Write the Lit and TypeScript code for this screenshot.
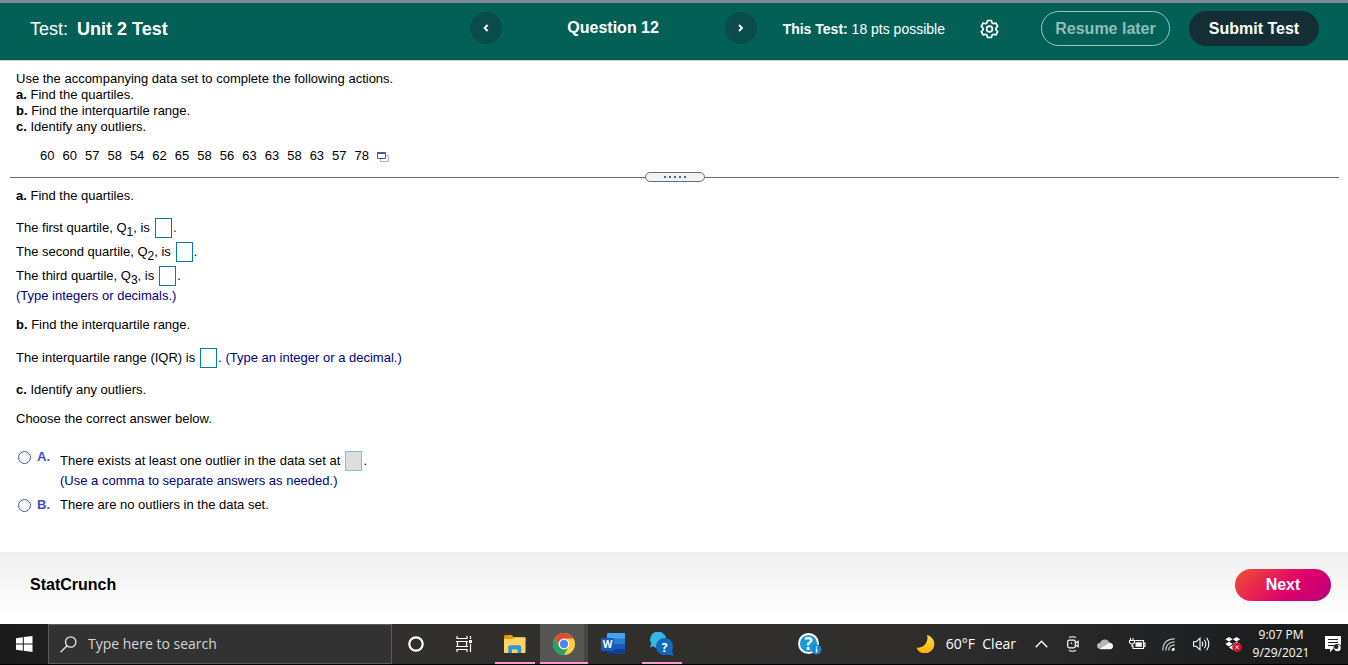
import { LitElement, html, css, svg } from "lit";
import { customElement, state } from "lit/decorators.js";

const DATA = [60, 60, 57, 58, 54, 62, 65, 58, 56, 63, 63, 58, 63, 57, 78];

@customElement("test-header")
class TestHeader extends LitElement {
  static styles = css`
    :host {
      display: block;
      background: #036056;
      border-top: 3px solid #808996;
      border-bottom: 1px solid #c9d3d9;
      color: #fff;
      font-family: "Liberation Sans", Arial, sans-serif;
    }
    .bar {
      display: flex;
      align-items: flex-start;
      height: 49px;
      padding: 8px 29px 0 30px;
    }
    .title {
      flex: 1;
      margin: 0;
      font-size: 18px;
      font-weight: 400;
      line-height: 36px;
      white-space: nowrap;
    }
    .title b { margin-left: 4px; }
    .nav { display: flex; align-items: center; height: 34px; margin-right: 26px; }
    .question { width: 223px; margin: 0; text-align: center; font-size: 16px; line-height: 36px; }
    button { font: inherit; padding: 0; border: 0; color: inherit; cursor: pointer; }
    .arrow {
      width: 32px;
      height: 32px;
      border-radius: 50%;
      background: #0a4c49;
      display: flex;
      align-items: center;
      justify-content: center;
    }
    .points { margin: 0; font-size: 14px; line-height: 36px; white-space: nowrap; }
    .gear { display: flex; align-items: center; height: 36px; margin: 0 42px 0 35px; background: none; }
    .pill {
      box-sizing: border-box;
      width: 130px;
      height: 35px;
      border-radius: 18px;
      font-size: 16px;
      font-weight: 700;
      white-space: nowrap;
    }
    .resume { width: 129px; margin-right: 19px; border: 1px solid #9cc4bf; background: none; color: #92bdb8; }
    .submit { background: #152e35; }
  `;
  render() {
    return html`
      <header class="bar">
        <h1 class="title">Test: <b>Unit 2 Test</b></h1>
        <nav class="nav" aria-label="Questions">
          <button class="arrow" aria-label="Previous question">
            <svg width="8" height="10" viewBox="0 0 8 10"><path d="M5.6 2 2.6 5l3 3" fill="none" stroke="#fff" stroke-width="1.8"/></svg>
          </button>
          <h2 class="question">Question 12</h2>
          <button class="arrow" aria-label="Next question">
            <svg width="8" height="10" viewBox="0 0 8 10"><path d="m2 2 3 3-3 3" fill="none" stroke="#fff" stroke-width="1.8"/></svg>
          </button>
        </nav>
        <p class="points"><b>This Test:</b> 18 pts possible</p>
        <button class="gear" aria-label="Settings">
          <svg width="19" height="20" viewBox="0 0 19 20" fill="none" stroke="#fff" stroke-width="1.7" stroke-linejoin="round">
            <path d="M7.6 1.5h3.8l.6 2.3 1.5.9 2.3-.7 1.9 3.3-1.7 1.7v2l1.7 1.7-1.9 3.3-2.3-.7-1.5.9-.6 2.3H7.6L7 16.2l-1.500-.9-2.300.7-1.900-3.300L3 11V9L1.300 7.300 3.200 4l2.300.7L7 3.800z"/>
            <circle cx="9.5" cy="10" r="2.9"/>
          </svg>
        </button>
        <button class="pill resume">Resume later</button>
        <button class="pill submit">Submit Test</button>
      </header>
    `;
  }
}

@customElement("question-panel")
class QuestionPanel extends LitElement {
  @state() choice = "";

  static styles = css`
    :host {
      display: block;
      padding: 10px 0 32px;
      background: #fff;
      color: #000;
      font: 13px/16px "Liberation Sans", Arial, sans-serif;
    }
    section { padding: 0 16px; }
    p { margin: 0; }
    .data { display: flex; align-items: center; gap: 8px; margin: 13px 0 0 24px; }
    .copy { display: flex; margin: 2px 0 0; padding: 0; border: 0; background: none; cursor: pointer; }
    .divider { display: flex; align-items: center; margin: 8px 9px 6px 10px; height: 10px; }
    .rule { flex: 1; height: 1px; background: #5f7180; }
    .handle {
      box-sizing: border-box;
      display: flex;
      align-items: center;
      justify-content: center;
      gap: 3px;
      width: 60px;
      height: 10px;
      padding: 0;
      border: 1px solid #5f7180;
      border-radius: 5px;
      background: #f1f3f4;
    }
    .handle i { width: 2px; height: 2px; background: #5b6670; }
    .spaced { margin-top: 13px; }
    .answers { margin-top: 12px; }
    .row { display: flex; align-items: center; height: 24px; white-space: pre; }
    sub { font-size: 12px; line-height: 0; vertical-align: -4px; }
    input[type="text"] {
      box-sizing: border-box;
      width: 17px;
      height: 20px;
      margin: 0 1px 0 5px;
      padding: 0;
      border: 1px solid #007fa3;
      border-radius: 0;
      background: #fff;
      font: inherit;
      text-align: center;
    }
    input[type="text"]:disabled { border-color: #7fbfd1; background: #dedede; }
    .hint { color: #000080; }
    .choices { margin: 0; padding: 22px 0 0; border: 0; }
    .choice { display: flex; }
    .choice + .choice { margin-top: 8px; }
    .pick { display: flex; width: 42px; margin-left: 2px; color: #3f51c5; font-weight: 700; }
    .pick input {
      appearance: none;
      box-sizing: border-box;
      width: 13px;
      height: 13px;
      margin: 2px 6px 0 0;
      border: 1px solid #3f51c5;
      border-radius: 50%;
    }
    .pick input:checked { background: #3f51c5; box-shadow: inset 0 0 0 2px #fff; }
  `;

  private pick(letter: string) {
    return html`<label class="pick"><input type="radio" name="outlier" value=${letter}
      @change=${() => (this.choice = letter)} />${letter}.</label>`;
  }

  render() {
    const quartiles = [["first", 1], ["second", 2], ["third", 3]];
    return html`
      <section>
        <p>Use the accompanying data set to complete the following actions.</p>
        <p><b>a.</b> Find the quartiles.</p>
        <p><b>b.</b> Find the interquartile range.</p>
        <p><b>c.</b> Identify any outliers.</p>
        <div class="data">
          ${DATA.map((n) => html`<span>${n}</span>`)}
          <button class="copy" aria-label="Open data set">
            <svg width="13" height="10" viewBox="0 0 13 10"><path d="M3.500 3.500h8v6h-8z" fill="#fff" stroke="#a9b2dd"/><path d="M.5.5h8v6h-8z" fill="#fff" stroke="#4656ab"/><path d="M0 0h9v2H0z" fill="#4656ab"/></svg>
          </button>
        </div>
      </section>
      <div class="divider">
        <span class="rule"></span>
        <button class="handle" aria-label="Resize panels"><i></i><i></i><i></i><i></i><i></i></button>
        <span class="rule"></span>
      </div>
      <section>
        <p><b>a.</b> Find the quartiles.</p>
        <div class="answers">
          ${quartiles.map(([name, n]) => html`
            <div class="row"><label for="q${n}">The ${name} quartile, Q<sub>${n}</sub>, is</label><input id="q${n}" type="text" />.</div>`)}
        </div>
        <p class="hint">(Type integers or decimals.)</p>
        <p class="spaced"><b>b.</b> Find the interquartile range.</p>
        <div class="row spaced"><label for="iqr">The interquartile range (IQR) is</label><input id="iqr" type="text" />. <span class="hint">(Type an integer or a decimal.)</span></div>
        <p class="answers"><b>c.</b> Identify any outliers.</p>
        <p class="spaced">Choose the correct answer below.</p>
        <fieldset class="choices" aria-label="Outliers">
          <div class="choice">
            ${this.pick("A")}
            <div>
              <div class="row"><label for="outliers">There exists at least one outlier in the data set at</label><input id="outliers" type="text" ?disabled=${this.choice !== "A"} />.</div>
              <p class="hint">(Use a comma to separate answers as needed.)</p>
            </div>
          </div>
          <div class="choice">${this.pick("B")}<p>There are no outliers in the data set.</p></div>
        </fieldset>
      </section>
    `;
  }
}

@customElement("test-footer")
class TestFooter extends LitElement {
  static styles = css`
    :host {
      box-sizing: border-box;
      display: flex;
      align-items: center;
      justify-content: space-between;
      height: 72px;
      padding: 0 17px 6px 30px;
      background: linear-gradient(#f0f0f0, #fff 90%);
      font-family: "Liberation Sans", Arial, sans-serif;
    }
    .tool { color: #000; font-size: 16px; font-weight: 700; text-decoration: none; }
    .next {
      width: 96px;
      height: 32px;
      padding: 0;
      border: 0;
      border-radius: 16px;
      background: linear-gradient(135deg, #f05033, #df006b 60%, #b7007c);
      color: #fff;
      font: 700 16px "Liberation Sans", Arial, sans-serif;
      cursor: pointer;
    }
  `;
  render() {
    return html`<a class="tool" href="#">StatCrunch</a><button class="next">Next</button>`;
  }
}

const icons = {
  start: svg`<svg width="17" height="16" viewBox="0 0 17 16" fill="#fff"><path d="M0 2.300 6.800 1.300v6.200H0zM7.800 1.100 16.500 0v7.500H7.800zM0 8.500h6.800v6.200L0 13.700zM7.800 8.500h8.700V16l-8.700-1.200z"/></svg>`,
  search: svg`<svg width="17" height="17" viewBox="0 0 17 17" fill="none" stroke="#e8e8e8" stroke-width="1.300"><circle cx="10.700" cy="6" r="5.200"/><path d="M7 9.700.6 16.200"/></svg>`,
  cortana: svg`<svg width="16" height="16" viewBox="0 0 16 16"><circle cx="8" cy="8" r="6.700" fill="none" stroke="#fff" stroke-width="2.200"/></svg>`,
  tasks: svg`<svg width="17" height="16" viewBox="0 0 17 16" fill="none" stroke="#fff" stroke-width="1.200"><path d="M1 0v2.500h10V0M0 5.500h12M0 10.500h12M1.500 5v6M10.500 5v6M1 16v-2.500h10V16M14.500 0v3M14.500 8v8"/><path d="M13 4h3v3h-3z" fill="#fff" stroke="none"/></svg>`,
  folder: svg`<svg width="22" height="19" viewBox="0 0 22 19"><path d="M0 1.500Q0 0 1.500 0h6.300l1.500 2H20q1.500 0 1.500 1.500V6H0z" fill="#e29b09"/><path d="M0 4h8.500l1.500-1.500h11.500V17q0 1-1 1H1q-1 0-1-1z" fill="#ffd664"/><path d="M4.200 18v-6q0-1.800 1.800-1.800h9.500q1.800 0 1.800 1.800v6h-3.800v-3.500H8V18z" fill="#3295df"/></svg>`,
  chrome: svg`<svg width="22" height="22" viewBox="0 0 22 22"><circle cx="11" cy="11" r="11" fill="#ffcd40"/><path d="M1.470 5.500A11 11 0 0 1 20.530 5.500H11A5.500 5.500 0 0 0 6.240 13.750z" fill="#dd4b3e"/><path d="M1.470 5.500A11 11 0 0 0 11 22l4.760-8.250A5.500 5.500 0 0 1 6.240 13.750z" fill="#1da462"/><circle cx="11" cy="11" r="5.300" fill="#fff"/><circle cx="11" cy="11" r="4.200" fill="#4587f3"/></svg>`,
  word: svg`<svg width="24" height="22" viewBox="0 0 24 22"><path d="M6 1q0-1 1-1h17v6H6z" fill="#41a5ee"/><path d="M6 5.500h18V11H6z" fill="#2b7cd3"/><path d="M6 11h18v5.500H6z" fill="#185abd"/><path d="M6 16.200h18V21H7q-1 0-1-1z" fill="#103f91"/><rect y="5" width="13" height="13" rx="1" fill="#185abd"/><text x="6.500" y="15" text-anchor="middle" fill="#fff" font-family="Open Sans" font-size="10" font-weight="700">W</text></svg>`,
  help: svg`<svg width="24" height="24" viewBox="0 0 24 24"><path d="M0 15.500 1.200 11.500A8 8 0 1 1 9 15.500Q5 16.500 3.500 14.300z" fill="#35b6e9"/><path d="M23.500 24 17.500 22.500a8.500 8.500 0 1 1 4.500-4z" fill="#0f6cbd"/><text x="14.500" y="19.500" text-anchor="middle" fill="#fff" font-family="Open Sans" font-size="12" font-weight="700">?</text></svg>`,
  support: svg`<svg width="24" height="22" viewBox="0 0 24 22"><circle cx="10.500" cy="10.500" r="10.500" fill="#fff"/><circle cx="10.500" cy="10.500" r="8.600" fill="#1a9bd7"/><text x="10.500" y="16.500" text-anchor="middle" fill="#fff" font-family="Open Sans" font-size="17" font-weight="700">?</text><circle cx="18.500" cy="16.500" r="5" fill="#1789c9"/><path d="M17.800 15.500h1.400v4h-1.400zM17.800 13.200h1.400v1.400h-1.400z" fill="#fff"/></svg>`,
  moon: svg`<svg width="19" height="18" viewBox="0 0 19 18"><defs><linearGradient id="m" x2="0" y2="1"><stop stop-color="#ffe04a"/><stop offset="1" stop-color="#ffae00"/></linearGradient></defs><path d="M11 0A9.300 9.300 0 1 1 .4 12.600 9.700 9.700 0 0 0 11 0z" fill="url(#m)"/></svg>`,
  up: svg`<svg width="13" height="8" viewBox="0 0 13 8"><path d="m.7 7.200 5.800-6 5.800 6" fill="none" stroke="#fff" stroke-width="1.300"/></svg>`,
  meet: svg`<svg width="12" height="16" viewBox="0 0 12 16" fill="none" stroke="#fff" stroke-width="1.200"><path d="M2 1.500Q5.500 0 9 1.500M2 14.500q3.500 1.500 7 0"/><rect x=".7" y="4.200" width="7.600" height="7.600" rx="1.500"/><path d="m8.300 7 2.800-1.700v5.400L8.300 9M4.500 6.500v1.500"/></svg>`,
  cloud: svg`<svg width="16" height="11" viewBox="0 0 16 11"><path d="M3 10Q0 9.600 0 6.800 0 4 3 3.700 5 0 8.500.5q3 .4 4 3L16 7q-.5 3-3 3z" fill="#b5b5b5"/><path d="M2.500 10 8 6.500l4.500-2.800Q16 4 16 7t-3 3.300H4z" fill="#f5f5f5"/></svg>`,
  battery: svg`<svg width="17" height="12" viewBox="0 0 17 12" fill="none" stroke="#fff" stroke-width="1.100"><path d="M6 2.500h8.500v8H4V7.500M14.500 5H16v3.500h-1.500M1.500 0v2.500M4 0v2.500M.5 2.500h5v2q-.5 1.500-2.500 1.500t-2.500-1.500zM3 6v3"/><path d="M6.500 4.300h6.300v4.500H6.500z" fill="#fff" stroke="none"/></svg>`,
  wifi: svg`<svg width="14" height="13" viewBox="0 0 14 13" fill="none" stroke="#c8c8c8" stroke-width="1.200"><path d="M.8 12.500Q.8 1 12.800.8M3.800 12.500Q4 4 12.800 3.800M6.700 12.500q.2-5.500 6.100-5.700"/><path d="M9.500 12.800q0-3 3-3.100v3.100z" fill="#fff" stroke="none"/></svg>`,
  sound: svg`<svg width="17" height="14" viewBox="0 0 17 14" fill="none" stroke="#fff" stroke-width="1.100"><path d="M.6 4.700h2.600L7 1.200v11.600L3.200 9.300H.6zM9 4.800q1.500 2.200 0 4.400M11.300 2.800q3 4.200 0 8.400M13.600.8q4.400 6.200 0 12.400"/></svg>`,
  dropbox: svg`<svg width="17" height="16" viewBox="0 0 17 16"><path d="m4 1 3.700 2.300L4 5.600.3 3.300zM11.500 1l3.700 2.300-3.700 2.300-3.700-2.300zM4 5.800l3.700 2.300L4 10.400.3 8.100zM11.500 5.800l3.700 2.300-3.700 2.300-3.700-2.300zM7.700 9.200l3.700 2.300-3.700 2.300L4 11.500z" fill="#fff"/><circle cx="12" cy="11.200" r="4.700" fill="#d6112b"/><path d="m10.300 9.500 3.400 3.400m0-3.400-3.400 3.400" stroke="#fff"/></svg>`,
  notice: svg`<svg width="17" height="17" viewBox="0 0 17 17"><path d="M0 0h16v13H8l-3 3v-3H0z" fill="#fff"/><path d="M3 3.500h10M3 6.500h10M3 9.500h6" stroke="#222"/><circle cx="12.500" cy="12" r="4" fill="#222"/><circle cx="12.500" cy="12" r="3.200" fill="#fff"/><circle cx="11.300" cy="10.800" r="2.200" fill="#222"/></svg>`,
};

@customElement("task-bar")
class TaskBar extends LitElement {
  static styles = css`
    :host {
      box-sizing: border-box;
      display: flex;
      height: 41px;
      border-bottom: 1px solid #000;
      background: linear-gradient(90deg, #1a1a1a, #1f1f1f 4%, #32302c 30%, #312f2d 60%, #29292a 78%, #1d1e1f 92%, #1c1c1c);
      color: #fff;
      font: 14px/20px "Open Sans", "Noto Sans", sans-serif;
    }
    button {
      box-sizing: border-box;
      display: flex;
      align-items: center;
      justify-content: center;
      width: 48px;
      height: 40px;
      padding: 0;
      border: 0;
      background: none;
      color: inherit;
      font: inherit;
    }
    .search {
      box-sizing: border-box;
      display: flex;
      align-items: center;
      gap: 11px;
      width: 344px;
      height: 40px;
      padding: 0 11px;
      border: 1px solid #5c5c5c;
      background: #323232;
    }
    .search input { flex: 1; min-width: 0; padding: 0; border: 0; outline: 0; background: none; color: #fff; font: inherit; }
    .search input::placeholder { color: #d6d6d6; opacity: 1; }
    .apps { display: flex; gap: 1px; margin-left: 3px; }
    .app { border-bottom: 2px solid transparent; border-top: 2px solid transparent; }
    .running { width: 40px; margin: 0 4px; border-bottom-color: #ff9bd2; }
    .active { border-color: transparent transparent #ff9bd2; background: linear-gradient(90deg, #555653 44px, #454543 44px) border-box; }
    .middle { display: flex; flex: 1; justify-content: center; padding-left: 18px; }
    .weather { width: auto; gap: 11px; margin-right: 9px; white-space: pre; }
    .tray { display: flex; }
    .tray button { width: 32px; }
    .clock { width: 64px; font-size: 12px; line-height: 18px; flex-direction: column; white-space: nowrap; }
    .notice { width: 35px; padding-left: 6px; }
  `;
  render() {
    return html`
      <button aria-label="Start">${icons.start}</button>
      <label class="search">${icons.search}<input type="text" aria-label="Search" placeholder="Type here to search" /></label>
      <button aria-label="Cortana">${icons.cortana}</button>
      <button aria-label="Task view">${icons.tasks}</button>
      <div class="apps">
        <button class="app running" aria-label="File Explorer">${icons.folder}</button>
        <button class="app active" aria-label="Chrome">${icons.chrome}</button>
        <button class="app" aria-label="Word">${icons.word}</button>
        <button class="app running" aria-label="Get Help">${icons.help}</button>
      </div>
      <div class="middle"><button aria-label="Support">${icons.support}</button></div>
      <button class="weather">${icons.moon}<span>60°F  Clear</span></button>
      <div class="tray">
        <button aria-label="Show hidden icons">${icons.up}</button>
        <button aria-label="Meet now">${icons.meet}</button>
        <button aria-label="OneDrive">${icons.cloud}</button>
        <button aria-label="Battery">${icons.battery}</button>
        <button aria-label="Network">${icons.wifi}</button>
        <button aria-label="Volume">${icons.sound}</button>
        <button aria-label="Dropbox">${icons.dropbox}</button>
      </div>
      <button class="clock"><span>9:07 PM</span><span>9/29/2021</span></button>
      <button class="notice" aria-label="Notifications">${icons.notice}</button>
    `;
  }
}

@customElement("app-root")
class AppRoot extends LitElement {
  static styles = css`
    :host { display: flex; flex-direction: column; min-height: 100vh; background: #fff; }
    .content { flex: 1; }
  `;
  render() {
    return html`
      <test-header></test-header>
      <question-panel class="content"></question-panel>
      <test-footer></test-footer>
      <task-bar></task-bar>
    `;
  }
}
